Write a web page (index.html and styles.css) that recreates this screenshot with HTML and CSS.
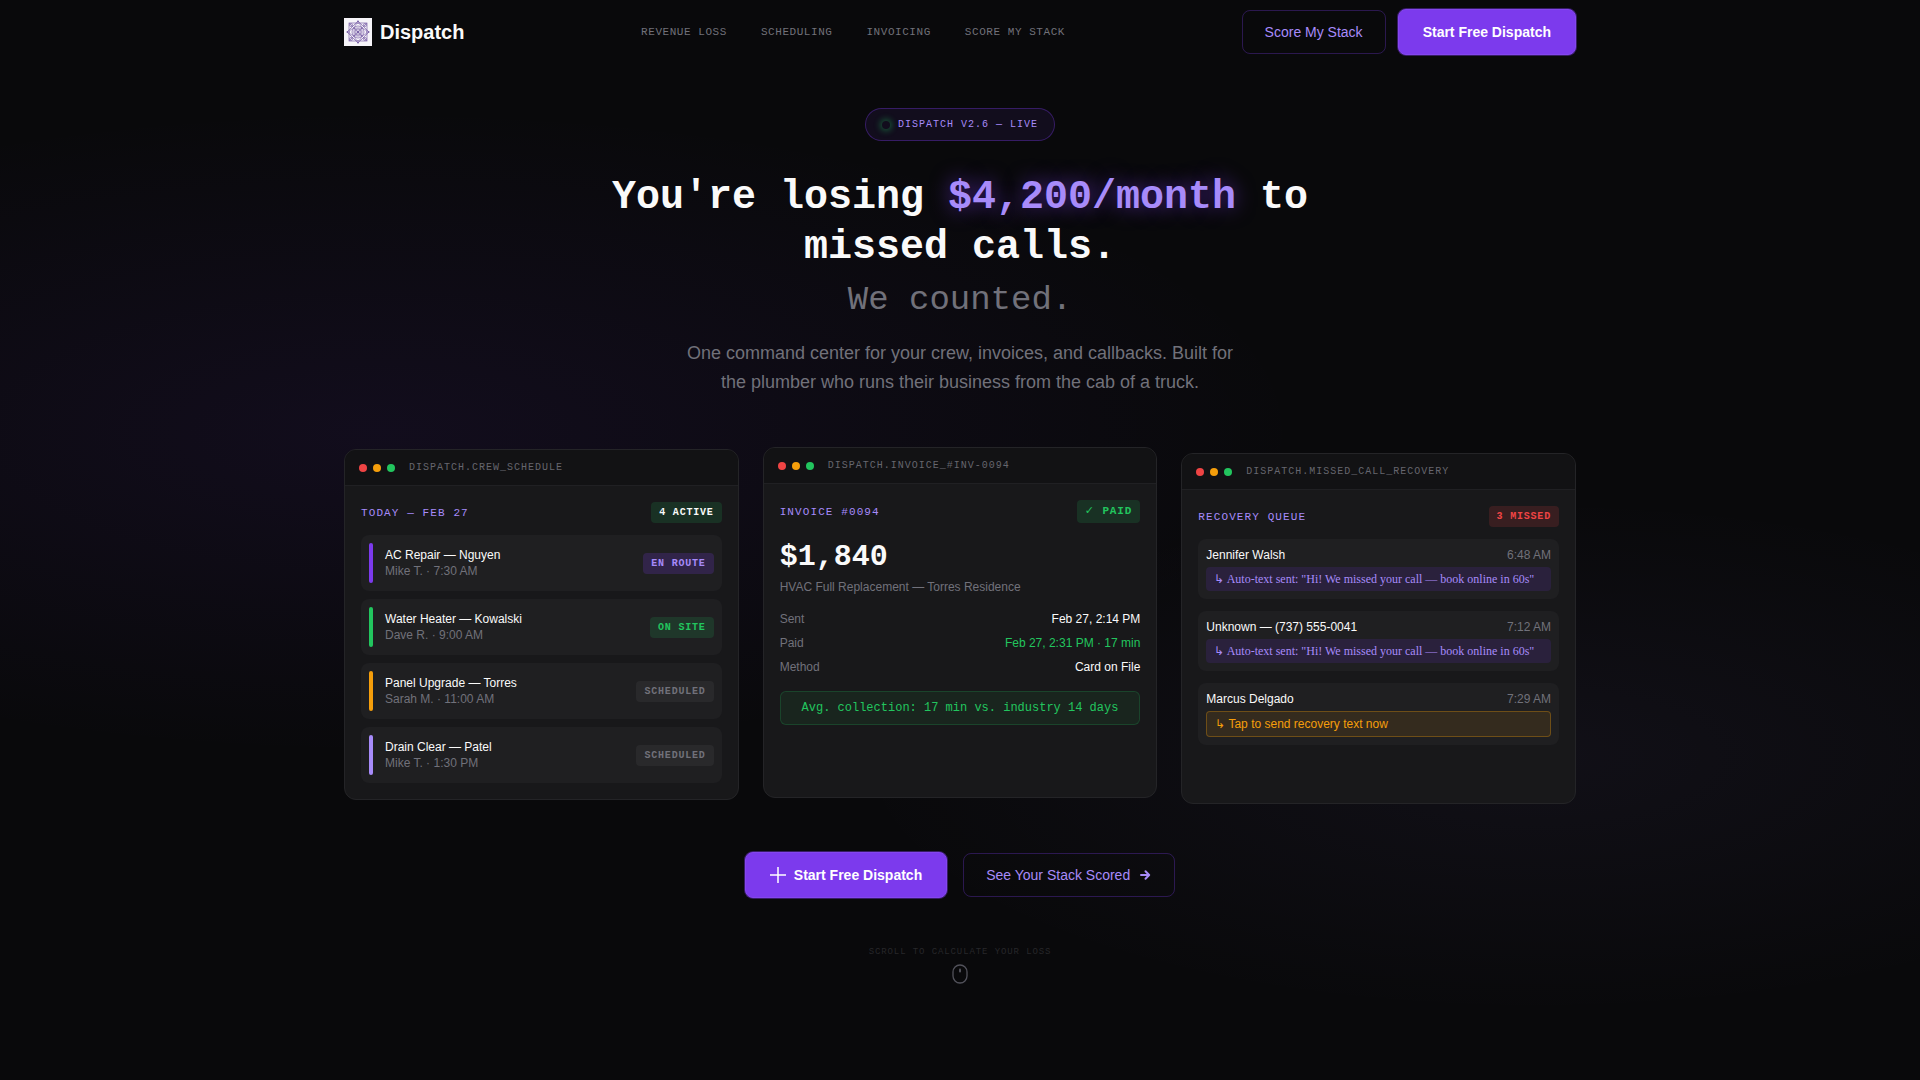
FILE: index.html
```html
<!DOCTYPE html>
<html lang="en">
<head>
  <meta charset="UTF-8" />
  <meta name="viewport" content="width=device-width, initial-scale=1.0" />
  <title>Dispatch</title>
  <link rel="stylesheet" href="styles.css">
</head>
<body>
  <header class="navbar">
    <div class="container navbar-inner">
      <a class="logo" href="#">
        <svg class="logo-mark" viewBox="0 0 28 28" aria-hidden="true">
          <rect width="28" height="28" fill="#f6f4f9" />
          <g fill="none" stroke="#7b62a8" stroke-width="0.7">
            <rect x="5" y="5" width="18" height="18" />
            <path d="M5 5l18 18M23 5L5 23M14 3l11 11-11 11L3 14z" />
            <circle cx="14" cy="14" r="3" />
            <circle cx="14" cy="14" r="6" />
            <ellipse cx="14" cy="14" rx="9" ry="4" />
            <ellipse cx="14" cy="14" rx="4" ry="9" />
            <circle cx="7" cy="7" r="1.5" />
            <circle cx="21" cy="7" r="1.5" />
            <circle cx="7" cy="21" r="1.5" />
            <circle cx="21" cy="21" r="1.5" />
          </g>
          <g fill="#7b62a8">
            <circle cx="14" cy="3.5" r="1" />
            <circle cx="14" cy="24.5" r="1" />
            <circle cx="3.5" cy="14" r="1" />
            <circle cx="24.5" cy="14" r="1" />
            <circle cx="14" cy="14" r="1.5" />
          </g>
        </svg>
        <span>Dispatch</span>
      </a>
      <nav class="nav-links">
        <a href="#loss">REVENUE LOSS</a>
        <a href="#scheduling">SCHEDULING</a>
        <a href="#invoicing">INVOICING</a>
        <a href="#score">SCORE MY STACK</a>
      </nav>
      <div class="nav-actions">
        <button class="btn btn-secondary" type="button">Score My Stack</button>
        <button class="btn btn-primary" type="button">Start Free Dispatch</button>
      </div>
    </div>
  </header>

  <main class="container hero">
    <div class="status-pill"><span class="status-dot"></span>DISPATCH V2.6 — LIVE</div>
    <h1 class="headline">
      You're losing <span class="amount-lost">$4,200/month</span> to<br>
      missed calls.
      <span class="headline-sub">We counted.</span>
    </h1>
    <p class="lead">One command center for your crew, invoices, and callbacks. Built for the plumber who runs their business from the cab of a truck.</p>

    <div class="panels">
      <!-- Crew schedule -->
      <section class="panel">
        <div class="panel-bar">
          <span class="dot red"></span><span class="dot amber"></span><span class="dot green"></span>
          <span class="panel-name">DISPATCH.CREW_SCHEDULE</span>
        </div>
        <div class="panel-body">
          <div class="panel-head">
            <h2>TODAY — FEB 27</h2>
            <span class="badge badge-active">4 ACTIVE</span>
          </div>
          <ul class="jobs">
            <li class="job">
              <span class="stripe violet"></span>
              <div class="job-info">
                <div class="job-title">AC Repair — Nguyen</div>
                <div class="muted">Mike T. · 7:30 AM</div>
              </div>
              <span class="badge badge-route">EN ROUTE</span>
            </li>
            <li class="job">
              <span class="stripe green"></span>
              <div class="job-info">
                <div class="job-title">Water Heater — Kowalski</div>
                <div class="muted">Dave R. · 9:00 AM</div>
              </div>
              <span class="badge badge-green">ON SITE</span>
            </li>
            <li class="job">
              <span class="stripe amber"></span>
              <div class="job-info">
                <div class="job-title">Panel Upgrade — Torres</div>
                <div class="muted">Sarah M. · 11:00 AM</div>
              </div>
              <span class="badge badge-idle">SCHEDULED</span>
            </li>
            <li class="job">
              <span class="stripe lavender"></span>
              <div class="job-info">
                <div class="job-title">Drain Clear — Patel</div>
                <div class="muted">Mike T. · 1:30 PM</div>
              </div>
              <span class="badge badge-idle">SCHEDULED</span>
            </li>
          </ul>
        </div>
      </section>

      <!-- Invoice -->
      <section class="panel panel-raised">
        <div class="panel-bar">
          <span class="dot red"></span><span class="dot amber"></span><span class="dot green"></span>
          <span class="panel-name">DISPATCH.INVOICE_#INV-0094</span>
        </div>
        <div class="panel-body">
          <div class="panel-head">
            <h2>INVOICE #0094</h2>
            <span class="badge badge-green badge-large">✓ PAID</span>
          </div>
          <div class="total">$1,840</div>
          <div class="muted">HVAC Full Replacement — Torres Residence</div>
          <dl class="invoice-rows">
            <div class="invoice-row"><dt>Sent</dt><dd>Feb 27, 2:14 PM</dd></div>
            <div class="invoice-row"><dt>Paid</dt><dd class="paid">Feb 27, 2:31 PM · 17 min</dd></div>
            <div class="invoice-row"><dt>Method</dt><dd>Card on File</dd></div>
          </dl>
          <div class="collection">Avg. collection: 17 min vs. industry 14 days</div>
        </div>
      </section>

      <!-- Missed calls -->
      <section class="panel panel-lowered">
        <div class="panel-bar">
          <span class="dot red"></span><span class="dot amber"></span><span class="dot green"></span>
          <span class="panel-name">DISPATCH.MISSED_CALL_RECOVERY</span>
        </div>
        <div class="panel-body">
          <div class="panel-head">
            <h2>RECOVERY QUEUE</h2>
            <span class="badge badge-red">3 MISSED</span>
          </div>
          <ul class="calls">
            <li class="call">
              <div class="call-top"><span>Jennifer Walsh</span><span class="muted">6:48 AM</span></div>
              <div class="auto-text">↳ Auto-text sent: "Hi! We missed your call — book online in 60s"</div>
            </li>
            <li class="call">
              <div class="call-top"><span>Unknown — (737) 555-0041</span><span class="muted">7:12 AM</span></div>
              <div class="auto-text">↳ Auto-text sent: "Hi! We missed your call — book online in 60s"</div>
            </li>
            <li class="call">
              <div class="call-top"><span>Marcus Delgado</span><span class="muted">7:29 AM</span></div>
              <button class="send-text" type="button">↳ Tap to send recovery text now</button>
            </li>
          </ul>
        </div>
      </section>
    </div>

    <div class="cta">
      <button class="btn btn-primary" type="button">
        <svg width="16" height="16" viewBox="0 0 16 16" fill="none" stroke="currentColor" stroke-width="1.5" aria-hidden="true"><path d="M8 0v16M0 8h16" /></svg>
        Start Free Dispatch
      </button>
      <button class="btn btn-secondary" type="button">
        See Your Stack Scored
        <svg width="14" height="14" viewBox="0 0 14 14" fill="none" stroke="currentColor" stroke-width="2" stroke-linecap="round" stroke-linejoin="round" aria-hidden="true"><path d="M3 7h8M7.500 3.300L11.200 7l-3.700 3.700" /></svg>
      </button>
    </div>

    <div class="scroll-hint">
      <span>SCROLL TO CALCULATE YOUR LOSS</span>
      <svg width="16" height="20" viewBox="0 0 16 20" fill="none" stroke="currentColor" aria-hidden="true">
        <rect x="1" y="1" width="14" height="18" rx="7" stroke-width="1.3" />
        <path d="M8 5.500v2" stroke-width="2" stroke-linecap="round" />
      </svg>
    </div>
  </main>
</body>
</html>
```
FILE: styles.css
```css
* {
  box-sizing: border-box;
  margin: 0;
  padding: 0;
}
:root {
  --violet: #7c3aed;
  --lavender: #a78bfa;
  --green: #22c55e;
  --amber: #f59e0b;
  --red: #ef4444;
  --muted: #71717a;
  --mono: "Liberation Mono", "DejaVu Sans", monospace;
  --sans: "Liberation Sans", sans-serif;
}
body {
  min-height: 100vh;
  background:
    radial-gradient(ellipse 80% 50% at 20% 40%, rgba(124, 58, 237, 0.08), transparent 60%),
    radial-gradient(ellipse 60% 40% at 80% 70%, rgba(167, 139, 250, 0.05), transparent 60%),
    #09090b;
  color: #fafafa;
  font-family: var(--sans);
  font-size: 12px;
  line-height: 16px;
}
ul {
  list-style: none;
}
a {
  color: inherit;
  text-decoration: none;
}
.container {
  width: 100%;
  max-width: 1280px;
  margin: 0 auto;
  padding: 0 24px;
}
.muted {
  color: var(--muted);
}

/* Navbar */
.navbar-inner {
  display: flex;
  justify-content: space-between;
  align-items: center;
  height: 64px;
}
.logo {
  display: flex;
  align-items: center;
  gap: 8px;
  font-size: 20px;
  font-weight: bold;
  line-height: 28px;
}
.logo-mark {
  width: 28px;
  height: 28px;
}
.nav-links {
  display: flex;
  gap: 34px;
  color: var(--muted);
  font-family: var(--mono);
  font-size: 11px;
  letter-spacing: 0.05em;
}
.nav-actions {
  display: flex;
  align-items: center;
  gap: 12px;
}

/* Buttons */
.btn {
  display: inline-flex;
  align-items: center;
  gap: 8px;
  border: 1px solid;
  border-radius: 8px;
  font-family: var(--sans);
  font-size: 14px;
  line-height: 16px;
  cursor: pointer;
}
.btn-primary {
  padding: 14px 24px;
  background: var(--violet);
  border-color: #8446ee;
  color: #fff;
  font-weight: bold;
  box-shadow: 0 0 0 1px rgba(124, 58, 237, 0.4);
}
.btn-secondary {
  padding: 13px 22px;
  background: transparent;
  border-color: rgba(124, 58, 237, 0.3);
  color: var(--lavender);
}

/* Hero */
.hero {
  display: flex;
  flex-direction: column;
  align-items: center;
  padding-top: 44px;
  padding-bottom: 80px;
}
.status-pill {
  display: flex;
  align-items: center;
  gap: 8px;
  padding: 8px 16px;
  border: 1px solid rgba(124, 58, 237, 0.35);
  border-radius: 999px;
  background: rgba(124, 58, 237, 0.08);
  color: var(--lavender);
  font-family: var(--mono);
  font-size: 10px;
  line-height: 15px;
  letter-spacing: 0.1em;
}
.status-dot {
  width: 8px;
  height: 8px;
  border-radius: 50%;
  box-shadow: 0 0 6px 2px rgba(34, 197, 94, 0.4);
}
.headline {
  max-width: 760px;
  margin-top: 32px;
  font-family: var(--mono);
  font-size: 40px;
  line-height: 50px;
  text-align: center;
}
.amount-lost {
  color: var(--lavender);
  text-shadow: 0 0 20px rgba(124, 58, 237, 0.6);
}
.headline-sub {
  display: block;
  margin-top: 2px;
  color: var(--muted);
  font-size: 34px;
  font-weight: normal;
}
.lead {
  max-width: 560px;
  margin-top: 14px;
  color: var(--muted);
  font-size: 18px;
  line-height: 29px;
  text-align: center;
}

/* Panels */
.panels {
  display: grid;
  grid-template-columns: repeat(3, 1fr);
  gap: 24px;
  width: 100%;
  margin-top: 52px;
}
.panel {
  overflow: hidden;
  border: 1px solid #242427;
  border-radius: 12px;
  background: #18181a;
}
.panel-raised {
  transform: translateY(-2px);
}
.panel-lowered {
  transform: translateY(4px);
}
.panel-bar {
  display: flex;
  align-items: center;
  gap: 6px;
  height: 36px;
  padding: 0 14px;
  border-bottom: 1px solid #202023;
  background: #121214;
}
.dot {
  width: 8px;
  height: 8px;
  border-radius: 50%;
}
.panel-name {
  margin-left: 8px;
  color: #66666e;
  font-family: var(--mono);
  font-size: 10px;
  letter-spacing: 0.1em;
}
.red {
  background: var(--red);
}
.amber {
  background: var(--amber);
}
.green {
  background: var(--green);
}
.violet {
  background: var(--violet);
}
.lavender {
  background: var(--lavender);
}
.panel-body {
  padding: 16px;
}
.panel-head {
  display: flex;
  justify-content: space-between;
  align-items: center;
  margin-bottom: 12px;
}
.panel-head h2 {
  color: var(--lavender);
  font-family: var(--mono);
  font-size: 11px;
  font-weight: normal;
  letter-spacing: 0.1em;
}
.badge {
  padding: 3px 8px;
  border-radius: 4px;
  font-family: var(--mono);
  font-size: 10px;
  font-weight: bold;
  line-height: 15px;
  letter-spacing: 0.08em;
}
.badge-large {
  font-size: 11px;
  line-height: 17px;
}
.badge-active {
  background: rgba(34, 197, 94, 0.15);
}
.badge-green {
  background: rgba(34, 197, 94, 0.15);
  color: var(--green);
}
.badge-route {
  background: rgba(124, 58, 237, 0.2);
  color: var(--lavender);
}
.badge-idle {
  background: #29292b;
  color: var(--muted);
}
.badge-red {
  background: rgba(239, 68, 68, 0.15);
  color: var(--red);
}

/* Crew schedule */
.jobs {
  display: flex;
  flex-direction: column;
  gap: 8px;
}
.job {
  display: flex;
  align-items: center;
  gap: 12px;
  padding: 8px;
  border-radius: 8px;
  background: #1f1f21;
}
.stripe {
  width: 4px;
  height: 40px;
  border-radius: 2px;
}
.job-info {
  flex: 1;
}

/* Invoice */
.total {
  font-family: var(--mono);
  font-size: 30px;
  font-weight: bold;
  line-height: 44px;
}
.invoice-rows {
  display: flex;
  flex-direction: column;
  gap: 8px;
  margin: 16px 0;
}
.invoice-row {
  display: flex;
  justify-content: space-between;
}
.invoice-row dt {
  color: var(--muted);
}
.invoice-row .paid {
  color: var(--green);
}
.collection {
  padding: 8px;
  border: 1px solid rgba(34, 197, 94, 0.2);
  border-radius: 6px;
  background: rgba(34, 197, 94, 0.08);
  color: var(--green);
  font-family: var(--mono);
  text-align: center;
}

/* Missed calls */
.calls {
  display: flex;
  flex-direction: column;
  gap: 12px;
}
.call {
  padding: 8px;
  border-radius: 8px;
  background: #1f1f21;
}
.call-top {
  display: flex;
  justify-content: space-between;
  margin-bottom: 4px;
}
.auto-text {
  padding: 4px 8px;
  border-radius: 4px;
  background: #2a213c;
  color: var(--lavender);
  font-family: "Liberation Serif", serif;
}
.send-text {
  display: block;
  width: 100%;
  padding: 4px 8px;
  border: 1px solid rgba(245, 158, 11, 0.3);
  border-radius: 4px;
  background: rgba(245, 158, 11, 0.1);
  color: var(--amber);
  font-family: var(--sans);
  font-size: 12px;
  line-height: 16px;
  text-align: left;
  cursor: pointer;
}

/* CTA */
.cta {
  display: flex;
  align-items: center;
  gap: 16px;
  margin-top: 52px;
}
.scroll-hint {
  display: flex;
  flex-direction: column;
  align-items: center;
  gap: 4px;
  margin-top: 46px;
  color: #52525b;
  font-family: var(--mono);
  font-size: 9px;
  letter-spacing: 0.1em;
}
.scroll-hint span {
  color: #27272a;
}
```
